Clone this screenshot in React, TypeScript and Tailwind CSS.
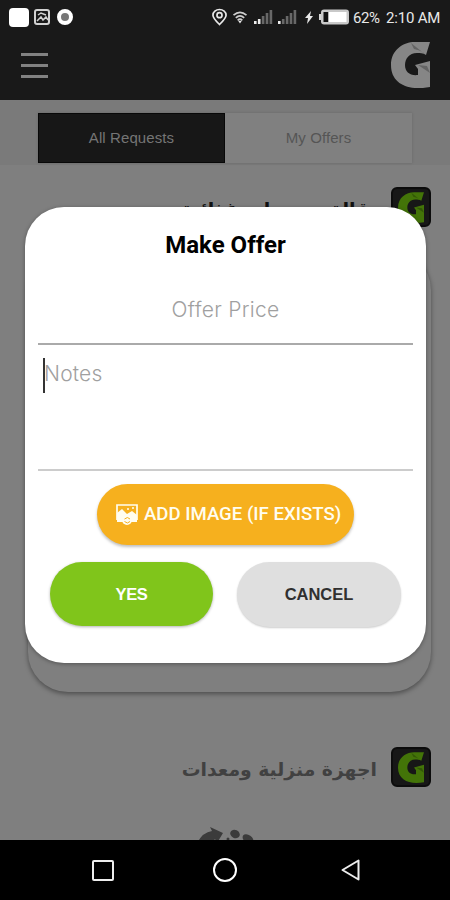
import React from "react";

const LogoMark = ({ className }: { className: string }) => (
  <svg viewBox="0 0 39 46" className={className} fill="currentColor">
    <path d="M39 0 35 13C32 11 29 11 26 11C18 11 14 17 14 23C14 30 19 34 27 33V27L24 23 39 19V45C19 49 0 43 0 23C0 8 12 0 24 0Z" />
    <path d="M20 1 35 13C30 8 26 8 23 7ZM27 23 39 31 36 24Z" fill="#000" opacity="0.25" />
  </svg>
);

const LogoTile = () => (
  <div className="flex h-10 w-10 shrink-0 items-center justify-center rounded-md border-2 border-[#0c0c0c] bg-[#171717]">
    <LogoMark className="h-[31px] w-[26px] text-[#437408]" />
  </div>
);

const Signal = ({ lit }: { lit: number }) => (
  <svg viewBox="0 0 19 15" className="h-[15px] w-[19px]">
    {[3, 5, 8, 11, 14].map((h, i) => (
      <rect key={h} x={i * 3.9} y={15 - h} width="2.6" height={h} fill={i < lit ? "#ededed" : "#686868"} />
    ))}
  </svg>
);

const StatusBar = () => (
  <div className="flex h-[34px] items-center pl-[9px] pr-[9px] text-[#e8e8e8]">
    <div className="h-[19px] w-5 rounded-sm bg-white"></div>
    <svg viewBox="0 0 16 16" className="ml-[5px] h-4 w-4" fill="none" stroke="#d2d2d2" strokeWidth="2">
      <rect x="1" y="1" width="14" height="14" rx="2" />
      <path d="m3 12 4-4 2 3 3-3 2 3M4 6l3-2 5 2" strokeWidth="1.5" />
    </svg>
    <div className="ml-[7px] h-4 w-4 rounded-full border-4 border-white bg-[#777]"></div>

    <div className="ml-auto flex items-center">
      <svg viewBox="0 0 16 18" className="h-[18px] w-[15px]" fill="none" stroke="currentColor" strokeWidth="1.8">
        <path d="M8 17C4 13 1 10 1 7a7 6 0 0 1 14 0c0 3-3 6-7 10Z" />
        <circle cx="8" cy="7" r="2.7" />
      </svg>
      <svg viewBox="0 0 16 14" className="ml-[5px] h-[13px] w-4" fill="none" stroke="#cfcfcf" strokeWidth="1.8">
        <path d="M1 4.5Q8-1.5 15 4.5M3.5 7.5Q8 3 12.5 7.5M5.5 10Q8 7.5 10.5 10" />
        <path d="m6 10.5 2 3 2-3Z" fill="#ededed" stroke="none" />
      </svg>
      <div className="ml-[6px] flex gap-[5px] pb-px">
        <Signal lit={2} />
        <Signal lit={1} />
      </div>
      <svg viewBox="0 0 8 13" className="ml-2 h-[13px] w-2" fill="currentColor">
        <path d="M6 0 0 7h3l-1 6 6-8H5Z" />
      </svg>
      <svg viewBox="0 0 30 16" className="ml-[6px] h-4 w-[30px]">
        <rect x="0" y="5" width="4" height="6" fill="#d5d5d5" />
        <rect x="2" y="0.5" width="28" height="15" rx="3" fill="#c9c9c9" />
        <rect x="4.5" y="3" width="5" height="10" fill="#111" />
        <rect x="9.5" y="3" width="18" height="10" fill="#fff" />
      </svg>
      <span className="ml-[4px] mt-[3px] w-[28px] whitespace-nowrap font-['Roboto'] text-[15px] tracking-[-0.4px]">62%</span>
      <span className="ml-[5px] mt-[3px] w-[55px] whitespace-nowrap font-['Roboto'] text-[15px] tracking-[-0.2px]">2:10 AM</span>
    </div>
  </div>
);

const Header = () => (
  <div className="h-[100px] bg-[#191919] shadow-[0_1px_4px_rgba(0,0,0,0.4)]">
    <StatusBar />
    <div className="flex items-start justify-between pl-[21px] pr-5 pt-2">
      <div className="mt-[11px] flex w-[27px] flex-col gap-[8px]">
        <div className="h-[3px] bg-[#828282]"></div>
        <div className="h-[3px] bg-[#828282]"></div>
        <div className="h-[3px] bg-[#828282]"></div>
      </div>
      <LogoMark className="h-[46px] w-[39px] text-[#868686]" />
    </div>
  </div>
);

const SectionTitle = ({ title, className }: { title: string; className: string }) => (
  <div className="flex items-center justify-end gap-[14px] pr-[19px]">
    <span dir="rtl" className={className}>{title}</span>
    <LogoTile />
  </div>
);

const NavBar = () => (
  <div className="absolute inset-x-0 bottom-0 flex h-[60px] items-center bg-black pl-[92px]">
    <div className="h-[21px] w-[22px] rounded-[2px] border-2 border-[#eee]"></div>
    <div className="ml-[99px] h-6 w-6 rounded-full border-2 border-white"></div>
    <svg viewBox="0 0 19 22" className="ml-[104px] h-[22px] w-[19px]" fill="none" stroke="#eee" strokeWidth="2" strokeLinejoin="round">
      <path d="M17.5 1.5v19L1.5 11Z" />
    </svg>
  </div>
);

const OfferDialog = () => (
  <div className="absolute left-[25px] top-[207px] h-[456px] w-[401px] rounded-[39px] bg-white px-[13px] shadow-[0_1px_4px_rgba(0,0,0,0.35)]">
    <h2 className="pt-[24px] text-center font-['Roboto'] text-[24px] font-bold leading-7 text-black">
      Make Offer
    </h2>
    <div className="mt-[20px] h-[66px] border-b-2 border-[#aaa] pt-[17px] text-center font-['Inter'] text-[21px] font-light leading-7 tracking-[0.3px] text-[#a0a0a0]">
      Offer Price
    </div>
    <div className="flex h-[126px] border-b-2 border-[#ccc] pl-[5px] pt-[13px]">
      <div className="h-[35px] w-[2px] bg-[#333]"></div>
      <span className="-ml-px pt-[2px] font-['Inter'] text-[21px] font-light leading-7 tracking-[0.2px] text-[#a0a0a0]">Notes</span>
    </div>
    <button className="mx-auto mt-[13px] flex h-[61px] w-[257px] items-center gap-[6px] rounded-full bg-[#f6b01e] pl-[19px] font-['Roboto'] text-[18.6px] font-medium text-[#fffdf0] shadow-[0_2px_3px_rgba(0,0,0,0.25)]">
      <svg viewBox="0 0 22 22" className="h-[22px] w-[22px] shrink-0" fill="none" stroke="currentColor">
        <path d="M1 16V1h20v15" strokeWidth="1.7" />
        <path d="M1 9 6 5l5 5 5-3 5 4v7H1Z" fill="currentColor" stroke="none" />
        <path d="M12 4v2M17 3v2" strokeWidth="1.5" />
        <circle cx="11" cy="16" r="5" fill="currentColor" stroke="none" />
        <path d="M8.5 15q3-3 5.5 0M8.5 17.5q3 3 5.5 0" stroke="#f6b01e" strokeWidth="1" />
      </svg>
      <span className="whitespace-nowrap">ADD IMAGE (IF EXISTS)</span>
    </button>
    <div className="mt-[17px] flex gap-6 pl-3 font-['Liberation_Sans'] text-[16.5px] font-bold">
      <button className="h-[64px] w-[163px] rounded-full bg-[#80c51b] tracking-[-0.3px] text-white shadow-[0_1px_3px_rgba(0,0,0,0.3)]">YES</button>
      <button className="h-[65px] w-[164px] rounded-full bg-[#dfdfdf] text-[#303030] shadow-[0_1px_2px_rgba(0,0,0,0.2)]">CANCEL</button>
    </div>
  </div>
);

const App = () => {
  return (
    <div className="relative h-[900px] w-[450px] overflow-hidden bg-[#7f7f7f]">
      <Header />
      <div className="h-[65px] bg-[#7a7a7a] px-[38px] pt-[13px]">
        <div className="flex h-[50px] bg-[#808080] font-['Liberation_Sans'] text-[15px] tracking-[0.1px] shadow-[0_0_3px_rgba(0,0,0,0.15)]">
          <div className="flex w-1/2 items-center justify-center border border-[#080808] bg-[#171717] pt-px text-[#757575]">All Requests</div>
          <div className="flex w-1/2 items-center justify-center pt-px text-[#555]">My Offers</div>
        </div>
      </div>
      <div className="pt-[22px]">
        <SectionTitle title="بقالة ومنتجات غذائية" className="pt-[5px] font-['DejaVu_Sans'] text-[19px] font-bold text-[#111]" />
      </div>
      <div className="ml-[28px] mt-[23px] h-[442px] w-[403px] rounded-[40px] bg-[#7f7f7f] shadow-[0_2px_5px_rgba(0,0,0,0.4)]"></div>
      <div className="mt-[55px]">
        <SectionTitle title="اجهزة منزلية ومعدات" className="pt-[6px] font-['DejaVu_Sans'] text-[18.8px] font-bold text-[#414141]" />
      </div>
      <svg viewBox="0 0 60 20" className="ml-[197px] mt-[40px] h-5 w-[60px]" fill="#3b3b3b">
        <path d="M0 16Q6 5 15 4L13 0 26 6 20 16 18 12 12 20H0Z" />
        <ellipse cx="38" cy="7" rx="5" ry="4" transform="rotate(25 38 7)" />
        <ellipse cx="51" cy="12" rx="6" ry="4" transform="rotate(35 51 12)" />
        <circle cx="31" cy="12" r="1.5" />
      </svg>
      <OfferDialog />
      <NavBar />
    </div>
  );
};

export default App;
